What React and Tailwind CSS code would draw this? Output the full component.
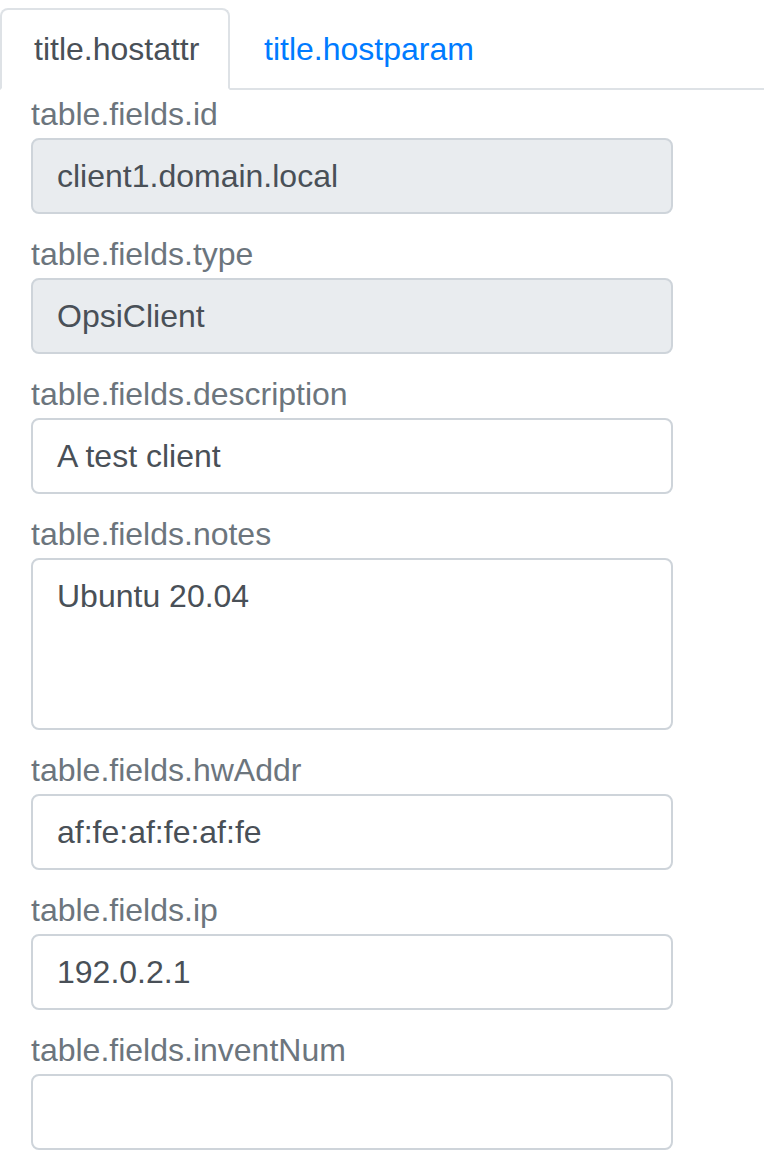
export default function App() {
  const fields = [
    { label: "table.fields.id", value: "client1.domain.local", readOnly: true },
    { label: "table.fields.type", value: "OpsiClient", readOnly: true },
    { label: "table.fields.description", value: "A test client" },
    { label: "table.fields.notes", value: "Ubuntu 20.04", area: true },
    { label: "table.fields.hwAddr", value: "af:fe:af:fe:af:fe" },
    { label: "table.fields.ip", value: "192.0.2.1" },
    { label: "table.fields.inventNum", value: "" },
  ];
  return (
    <div
      className="w-[764px] min-h-[1164px] bg-white text-[32px] leading-[48px] text-[#495057]"
      style={{ fontFamily: '"Liberation Sans", Arial, sans-serif' }}
    >
      <div className="pt-[8px]">
        <div className="flex border-b-2 border-[#dee2e6]">
          <div className="-mb-[2px] w-[230px] whitespace-nowrap border-2 border-[#dee2e6] border-b-white rounded-t-[8px] bg-white px-[32px] py-[15px] text-[#495057]">
            title.hostattr
          </div>
          <div className="-mb-[2px] whitespace-nowrap border-2 border-transparent px-[32px] py-[15px] text-[#007bff]">
            title.hostparam
          </div>
        </div>
        <div className="pl-[31px]">
          {fields.map((f) => (
            <div key={f.label} className="mb-[16px]">
              <div className="h-[48px] text-[#6c757d]">{f.label}</div>
              <div
                className={`w-[642px] border-2 border-[#ced4da] rounded-[8px] px-[24px] py-[12px] text-[#495057] ${
                  f.area ? "h-[172px]" : "h-[76px]"
                } ${f.readOnly ? "bg-[#e9ecef]" : "bg-white"}`}
              >
                {f.value}
              </div>
            </div>
          ))}
        </div>
      </div>
    </div>
  );
}
